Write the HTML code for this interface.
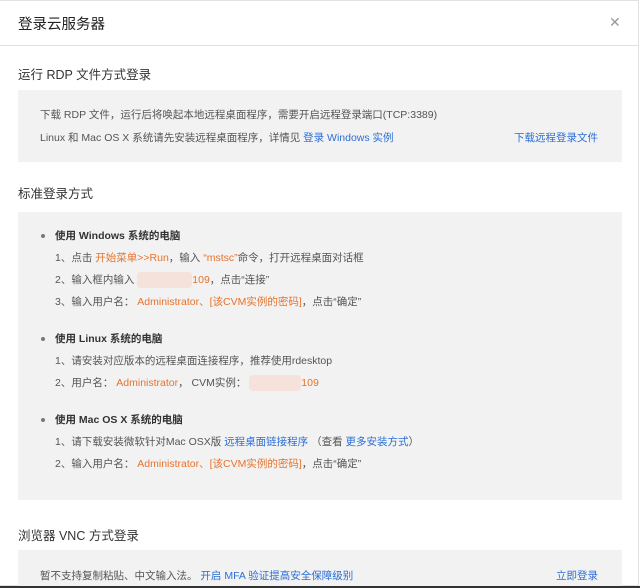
<!DOCTYPE html>
<html><head><meta charset="utf-8"><style>
*{margin:0;padding:0;box-sizing:border-box}
body{width:640px;height:588px;background:#fff;font-family:"Liberation Sans","Noto Sans CJK SC",sans-serif;font-size:10.5px;color:#555;position:relative;overflow:hidden}
.frame{position:absolute;left:0;top:0;width:639px;height:586px;border:1px solid #e2e2e2;border-left:none}
.hdr{position:absolute;left:0;top:0;width:639px;height:46px;border-bottom:1px solid #e0e0e0}
.hdr h1{position:absolute;left:18px;top:13px;font-size:14.5px;font-weight:normal;color:#222}
.x{position:absolute;left:609px;top:14px;font-size:14px;color:#999}
.t{position:absolute;left:18px;font-size:12.5px;color:#333}
.box{position:absolute;left:18px;width:604px;background:#f2f2f2}
.l{position:absolute;white-space:nowrap}
.o{color:#e8722c}.b{color:#2b6fd6}
.bd{font-weight:bold;color:#333}
.dot{position:absolute;left:41px;width:4px;height:4px;background:#777;border-radius:50%}
.blur{display:inline-block;background:#f5e2da;height:16px;vertical-align:middle;border-radius:4px}
.bot{position:absolute;left:0;top:586px;width:640px;height:2px;background:#333}
</style></head><body>
<div class="frame"></div>
<div class="hdr"><h1>登录云服务器</h1><div class="x">✕</div></div>
<div class="t" style="top:64px">运行 RDP 文件方式登录</div>
<div class="box" style="top:90px;height:72px"></div>
<div class="l" style="left:40px;top:107px">下载 RDP 文件，运行后将唤起本地远程桌面程序，需要开启远程登录端口(TCP:3389)</div>
<div class="l" style="left:40px;top:130px">Linux 和 Mac OS X 系统请先安装远程桌面程序，详情见 <span class="b">登录 Windows 实例</span></div>
<div class="l b" style="left:514px;top:130px">下载远程登录文件</div>
<div class="t" style="top:183px">标准登录方式</div>
<div class="box" style="top:212px;height:288px"></div>
<div class="dot" style="top:234px"></div>
<div class="l bd" style="left:55px;top:228px">使用 Windows 系统的电脑</div>
<div class="l" style="left:55px;top:250px">1、点击 <span class="o">开始菜单&gt;&gt;Run</span>，输入 <span class="o">“mstsc”</span>命令，打开远程桌面对话框</div>
<div class="l" style="left:55px;top:272px">2、输入框内输入 <span class="blur" style="width:55px"></span><span class="o">109</span>，点击“连接”</div>
<div class="l" style="left:55px;top:294px">3、输入用户名： <span class="o">Administrator、[该CVM实例的密码]</span>，点击“确定”</div>
<div class="dot" style="top:337px"></div>
<div class="l bd" style="left:55px;top:331px">使用 Linux 系统的电脑</div>
<div class="l" style="left:55px;top:353px">1、请安装对应版本的远程桌面连接程序，推荐使用rdesktop</div>
<div class="l" style="left:55px;top:375px">2、用户名： <span class="o">Administrator</span>， CVM实例： <span class="blur" style="width:52px"></span><span class="o">109</span></div>
<div class="dot" style="top:418px"></div>
<div class="l bd" style="left:55px;top:412px">使用 Mac OS X 系统的电脑</div>
<div class="l" style="left:55px;top:434px">1、请下载安装微软针对Mac OSX版 <span class="b">远程桌面链接程序</span> （查看 <span class="b">更多安装方式</span>）</div>
<div class="l" style="left:55px;top:456px">2、输入用户名： <span class="o">Administrator、[该CVM实例的密码]</span>，点击“确定”</div>
<div class="t" style="top:525px">浏览器 VNC 方式登录</div>
<div class="box" style="top:550px;height:36px"></div>
<div class="l" style="left:40px;top:568px">暂不支持复制粘贴、中文输入法。 <span class="b">开启 MFA 验证提高安全保障级别</span></div>
<div class="l b" style="left:556px;top:568px">立即登录</div>
<div class="bot"></div>
</body></html>
